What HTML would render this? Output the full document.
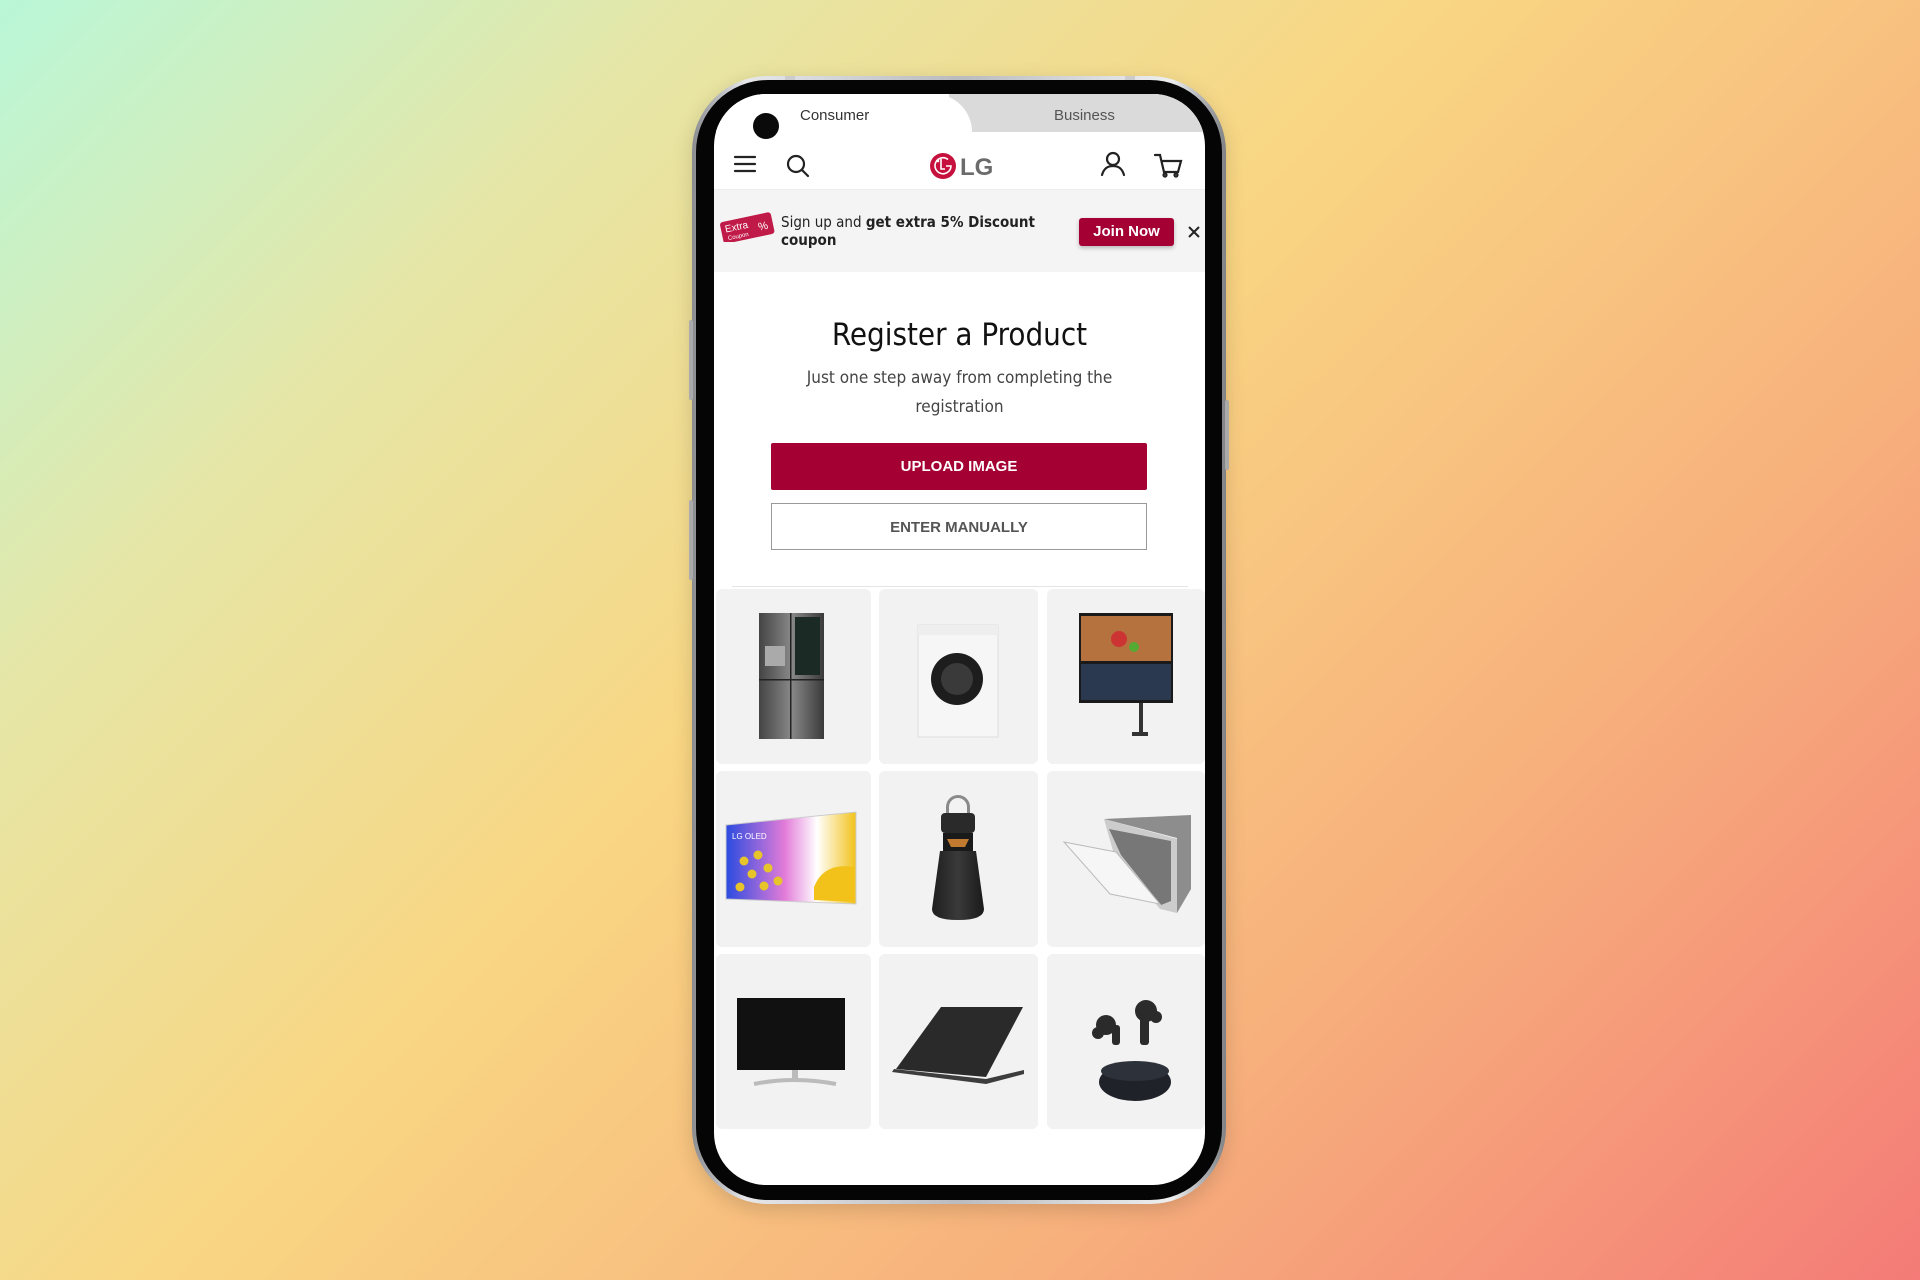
<!DOCTYPE html>
<html><head><meta charset="utf-8"><style>
*{margin:0;padding:0;box-sizing:border-box}
body{width:1920px;height:1280px;overflow:hidden;font-family:"Liberation Sans",sans-serif;
background:linear-gradient(135deg,#b9f7d8 0%,#e6e6a6 22%,#f9d683 45%,#f7b07c 72%,#f47b77 100%);position:relative}
.phone{position:absolute;left:692px;top:76px;width:534px;height:1128px;border-radius:76px;background:linear-gradient(90deg,#8a8c90,#e6e7ea 10%,#b9bbbe 50%,#eceef0 90%,#7f8185);padding:4px;box-shadow:0 6px 20px rgba(0,0,0,.15)}
.bez{width:100%;height:100%;border-radius:72px;background:#050505;position:relative}
.screen{position:absolute;left:714px;top:94px;width:491px;height:1091px;border-radius:52px;background:#fff;overflow:hidden}
.abs{position:absolute}
.tabs{position:absolute;left:0;top:0;width:491px;height:38px;background:#fff}
.biz{position:absolute;left:235px;top:0;width:256px;height:38px;background:#dadada}
.cons{position:absolute;left:0;top:0;width:258px;height:38px;background:#fff;border-radius:0 60px 0 0}
.tabt{position:absolute;top:13px;font-size:15px;color:#333}
.banner{position:absolute;left:0;top:96px;width:491px;height:82px;background:#f4f4f4}
.cell{position:absolute;background:#f2f2f2;border-radius:6px}
.btn{position:absolute;left:57px;width:376px;height:47px;font-weight:bold;font-size:15px;text-align:center;line-height:47px}
</style></head><body>
<div class="phone"><div class="bez"></div></div>
<div class="abs" style="left:689px;top:320px;width:4px;height:80px;background:#aaa;border-radius:2px"></div>
<div class="abs" style="left:689px;top:500px;width:4px;height:80px;background:#aaa;border-radius:2px"></div>
<div class="abs" style="left:1225px;top:400px;width:4px;height:70px;background:#aaa;border-radius:2px"></div>
<div class="abs" style="left:785px;top:76px;width:10px;height:4px;background:#ccc"></div>
<div class="abs" style="left:1125px;top:76px;width:10px;height:4px;background:#ccc"></div>
<div class="abs" style="left:880px;top:1200px;width:10px;height:4px;background:#ccc"></div>
<div class="abs" style="left:1028px;top:1200px;width:10px;height:4px;background:#ccc"></div>
<div class="screen">
 <div class="tabs"><div class="biz"></div><div class="cons"></div>
  <div class="tabt" style="left:86px">Consumer</div>
  <div class="tabt" style="left:340px;color:#555">Business</div></div>
 <div class="abs" style="left:39px;top:19px;width:26px;height:26px;border-radius:50%;background:#0a0a0a"></div>
 <svg class="abs" style="left:18px;top:56px" width="460" height="34" viewBox="0 0 460 34">
  <g stroke="#222" stroke-width="2.2" fill="none" stroke-linecap="round">
   <path d="M3 7h20M3 14h20M3 21h20"/>
   <circle cx="64" cy="14" r="8"/><path d="M70 20l6 6"/>
   <circle cx="381" cy="9" r="6"/><path d="M370 25c2-7 6-9 11-9s9 2 11 9"/>
   <path d="M423 5h5l4 17h14l3-11h-18"/><circle cx="433" cy="25" r="1.5"/><circle cx="444" cy="25" r="1.5"/>
  </g>
  <circle cx="211" cy="16" r="13" fill="#c6103d"/>
  <path d="M216 9.5a8 8 0 1 0 3 6.5h-5" fill="none" stroke="#fff" stroke-width="1.6"/>
  <path d="M209 9v10h4" fill="none" stroke="#fff" stroke-width="1.6"/>
  <circle cx="206" cy="11" r="1.3" fill="#fff"/>
  <text x="228" y="25" font-family="Liberation Sans" font-weight="bold" font-size="24" fill="#6b6b6b">LG</text>
 </svg>
 <div class="abs" style="left:0;top:95px;width:491px;height:1px;background:#eee"></div>
 <div class="banner">
  <svg class="abs" style="left:4px;top:22px" width="58" height="30" viewBox="0 0 58 30"><g transform="rotate(-12 29 15)"><rect x="3" y="5" width="52" height="22" rx="3" fill="#c01a48"/><text x="7" y="16" font-size="10" fill="#fff" font-family="Liberation Sans">Extra</text><text x="8" y="24" font-size="6" fill="#fff" font-family="Liberation Sans">Coupon</text><text x="40" y="21" font-size="11" fill="#fff" font-family="Liberation Sans">%</text></g></svg>
  <div class="abs" style="left:67px;top:23px;font-size:15px;line-height:18px;color:#222;font-family:'DejaVu Sans Condensed','Liberation Sans',sans-serif">Sign up and <b>get extra 5% Discount</b><br><b>coupon</b></div>
  <div class="abs" style="left:365px;top:28px;width:95px;height:28px;background:#a50034;border-radius:3px;color:#fff;font-weight:bold;font-size:15px;text-align:center;line-height:28px;box-shadow:0 2px 4px rgba(0,0,0,.25)">Join Now</div>
  <svg class="abs" style="left:473px;top:35px" width="14" height="14"><path d="M2 2l10 10M12 2L2 12" stroke="#222" stroke-width="2"/></svg>
 </div>
 <div class="abs" style="left:0;top:223px;width:491px;text-align:center;font-size:31px;color:#111;font-family:'DejaVu Sans Condensed','Liberation Sans',sans-serif">Register a Product</div>
 <div class="abs" style="left:60px;top:270px;width:371px;text-align:center;font-size:17px;line-height:29px;color:#444;font-family:'DejaVu Sans Condensed','Liberation Sans',sans-serif">Just one step away from completing the registration</div>
 <div class="btn" style="top:349px;background:#a50034;color:#fff;border-radius:2px">UPLOAD IMAGE</div>
 <div class="btn" style="top:409px;border:1.5px solid #999;color:#555;background:#fff">ENTER MANUALLY</div>
 <div class="abs" style="left:18px;top:492px;width:456px;height:1px;background:#e5e5e5"></div>
 <div class="cell" style="left:2px;top:495px;width:155px;height:175px"></div>
 <div class="cell" style="left:165px;top:495px;width:159px;height:175px"></div>
 <div class="cell" style="left:333px;top:495px;width:158px;height:175px"></div>
 <div class="cell" style="left:2px;top:677px;width:155px;height:176px"></div>
 <div class="cell" style="left:165px;top:677px;width:159px;height:176px"></div>
 <div class="cell" style="left:333px;top:677px;width:158px;height:176px"></div>
 <div class="cell" style="left:2px;top:860px;width:155px;height:175px"></div>
 <div class="cell" style="left:165px;top:860px;width:159px;height:175px"></div>
 <div class="cell" style="left:333px;top:860px;width:158px;height:175px"></div>
 <svg class="abs" style="left:0;top:495px" width="491" height="540" viewBox="0 0 491 540">
  <defs><linearGradient id="st" x1="0" x2="1"><stop offset="0" stop-color="#444"/><stop offset=".5" stop-color="#888"/><stop offset="1" stop-color="#3a3a3a"/></linearGradient>
  <linearGradient id="art" x1="0" x2="1"><stop offset="0" stop-color="#2a4be0"/><stop offset=".45" stop-color="#e27bd8"/><stop offset=".7" stop-color="#fff"/><stop offset="1" stop-color="#f2c21a"/></linearGradient>
  <linearGradient id="spk" x1="0" x2="1"><stop offset="0" stop-color="#1e1e1e"/><stop offset=".5" stop-color="#3a3a3a"/><stop offset="1" stop-color="#1a1a1a"/></linearGradient></defs>
  <rect x="45" y="24" width="65" height="126" fill="url(#st)"/><rect x="76" y="24" width="1.5" height="126" fill="#222"/><rect x="45" y="90" width="65" height="1.5" fill="#222"/><rect x="81" y="28" width="25" height="58" fill="#1c2a26"/><rect x="51" y="57" width="20" height="20" fill="#aaa"/>
  <rect x="204" y="36" width="80" height="112" fill="#f6f6f6" stroke="#ddd"/><rect x="204" y="36" width="80" height="10" fill="#eee"/><circle cx="243" cy="90" r="26" fill="#1d1d1d"/><circle cx="243" cy="90" r="16" fill="#3a3a3a"/>
  <rect x="365" y="24" width="94" height="90" fill="#1a1a1a"/><rect x="367" y="27" width="90" height="45" fill="#b5723e"/><circle cx="405" cy="50" r="8" fill="#c33"/><circle cx="420" cy="58" r="5" fill="#5a3"/><rect x="367" y="75" width="90" height="36" fill="#2a3850"/><rect x="425" y="114" width="4" height="30" fill="#333"/><rect x="418" y="143" width="16" height="4" fill="#333"/>
  <path d="M12 236L142 223V315L12 310Z" fill="url(#art)" stroke="#ccc"/><text x="18" y="250" font-size="8" fill="#fff" font-family="Liberation Sans">LG OLED</text><g fill="#e7c42a"><circle cx="30" cy="272" r="4.5"/><circle cx="44" cy="266" r="4.5"/><circle cx="38" cy="285" r="4.5"/><circle cx="54" cy="279" r="4.5"/><circle cx="26" cy="298" r="4.5"/><circle cx="50" cy="297" r="4.5"/><circle cx="64" cy="292" r="4.5"/></g><path d="M100 298q10-25 40-20v35l-40 -2z" fill="#f2c21a"/>
  <path d="M232 226v-8a12 12 0 0 1 24 0v8h-3v-8a9 9 0 0 0-18 0v8z" fill="#8a8a8a"/><rect x="227" y="224" width="34" height="20" rx="4" fill="#2a2a2a"/><path d="M229 244h30v18h-30z" fill="#1a1a1a"/><path d="M233 250h22l-4 8h-14z" fill="#c27a30"/><path d="M226 262h36l8 58q0 11-26 11t-26-11z" fill="url(#spk)"/>
  <path d="M390 230l87-4v74l-14 24v-75z" fill="#8d8d8d"/><path d="M390 230l73 20v74l-17-4-47-58z" fill="#ccc"/><path d="M395 240l62 12v60l-10 4-40-50z" fill="#777"/><path d="M350 253l52 10 44 52-50-10z" fill="#f6f6f6" stroke="#bbb"/>
  <rect x="23" y="409" width="108" height="72" fill="#111"/><rect x="78" y="481" width="6" height="10" fill="#bbb"/><path d="M40 495q40-8 82 0" stroke="#bbb" stroke-width="4" fill="none"/>
  <path d="M182 480l45-62h82l-37 70z" fill="#2a2a2a"/><path d="M180 480l92 10 38-9v4l-38 10-94-12z" fill="#3d3d3d"/>
  <ellipse cx="421" cy="493" rx="36" ry="19" fill="#1f2228"/><ellipse cx="421" cy="482" rx="34" ry="10" fill="#2d3139"/><circle cx="392" cy="436" r="10" fill="#2b2b2b"/><circle cx="384" cy="444" r="6" fill="#2b2b2b"/><rect x="398" y="436" width="8" height="20" rx="3" fill="#2b2b2b"/><circle cx="432" cy="422" r="11" fill="#2b2b2b"/><circle cx="442" cy="428" r="6" fill="#2b2b2b"/><rect x="426" y="424" width="9" height="32" rx="3" fill="#2b2b2b"/>
 </svg>
</div>
</body></html>
